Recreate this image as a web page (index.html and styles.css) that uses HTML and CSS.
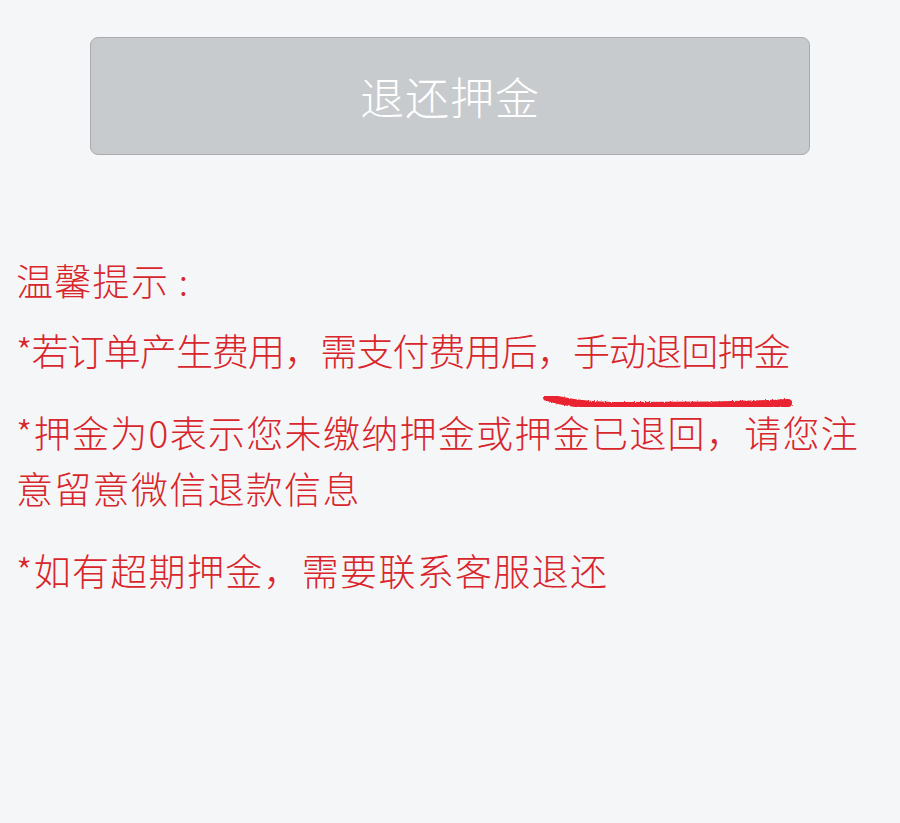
FILE: index.html
```html
<!DOCTYPE html>
<html lang="zh-CN">
<head>
  <meta charset="UTF-8" />
  <meta name="viewport" content="width=device-width, initial-scale=1.0" />
  <title>退还押金</title>
  <link rel="stylesheet" href="styles.css">
</head>
<body>

<div class="actions">
  <button class="refund-btn" disabled>退还押金</button>
</div>

<section class="notice">
  <p class="notice-title">温馨提示 :</p>
  <p class="tip tip-tight">*若订单产生费用，需支付费用后，<span class="marked">手动退回押金<svg class="marker" viewBox="0 0 250 22" aria-hidden="true">
    <defs>
      <filter id="rough">
        <feTurbulence type="fractalNoise" baseFrequency="0.8" numOctaves="2" result="noise" />
        <feDisplacementMap in="SourceGraphic" in2="noise" scale="3" />
      </filter>
    </defs>
    <path d="M4 4 C 20 9, 40 13, 80 13 S 200 13, 245 10" filter="url(#rough)" />
  </svg></span></p>
  <p class="tip">*押金为0表示您未缴纳押金或押金已退回，请您注意留意微信退款信息</p>
  <p class="tip">*如有超期押金，需要联系客服退还</p>
</section>

</body>
</html>
```

FILE: styles.css
```css
body {
  margin: 0;
  background: #f5f6f8;
  font-family: "Noto Sans CJK SC", "Noto Sans", sans-serif;
  min-height: 100vh;
}

/* top button */
.actions {
  padding: 37px 90px 0;
}
.refund-btn {
  display: block;
  width: 100%;
  height: 118px;
  background: #c8cbce;
  border: 1px solid #a8acb0;
  border-radius: 8px;
  color: #fff;
  font-family: inherit;
  font-size: 44px;
  font-weight: 300;
  letter-spacing: 1px;
  cursor: default;
}

/* tips */
.notice {
  padding: 97px 16px 0;
  color: #d8262c;
}
.notice p {
  margin: 0;
  font-size: 37px;
  font-weight: 300;
  line-height: 56px;
  letter-spacing: 1.3px;
}
.notice-title {
  margin-bottom: 14px !important;
}
.tip + .tip {
  margin-top: 26px;
}
.tip-tight {
  letter-spacing: -0.9px !important;
}

.marked {
  position: relative;
}
.marker {
  position: absolute;
  left: -30px;
  top: calc(100% + 16px);
  width: 250px;
  height: 22px;
  overflow: visible;
}
.marker path {
  fill: none;
  stroke: #e8111c;
  stroke-width: 8;
  stroke-linecap: round;
  opacity: 0.9;
}
```
